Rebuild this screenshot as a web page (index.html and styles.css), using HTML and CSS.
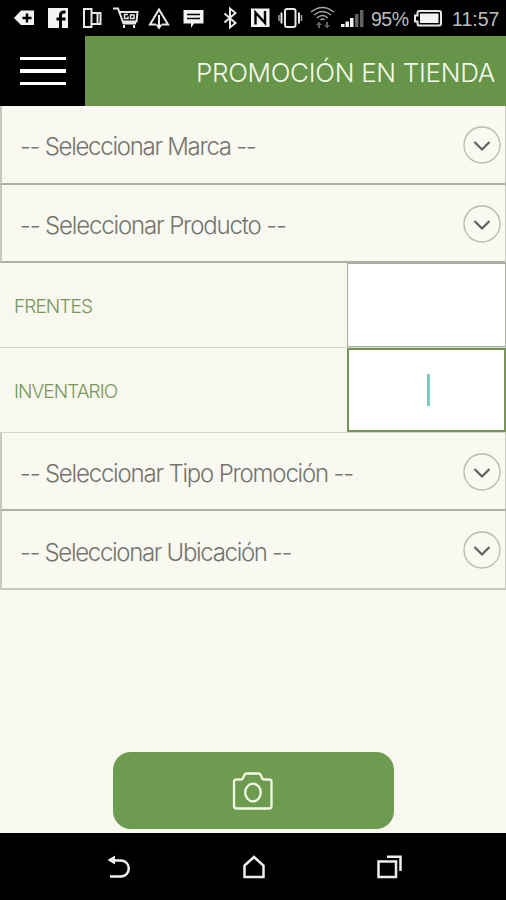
FILE: index.html
```html
<!DOCTYPE html>
<html lang="es">
<head>
<meta charset="utf-8">
<title>Promoción en tienda</title>
<link rel="stylesheet" href="styles.css">
</head>
<body>
<div class="screen">
  <div class="status">
    <svg width="41" height="36" viewBox="0 0 41 36"><path class="fill" d="M14 18l7-7.500h13v14.500H21z"/><path class="ink" d="M27 13.500v9M22.500 18h9"/></svg>
    <svg width="35" height="36" viewBox="41 0 35 36"><path class="fill" d="M48 8h20v20H48z"/><path class="ink bold" d="M60.500 28V15.500q0-3.500 3.500-3.500h1.500M56.500 19h9"/></svg>
    <svg width="33" height="36" viewBox="76 0 33 36"><path class="line" d="M84 9h7.500v18H84zM92 13h8.500v11H92M97.500 13v11"/></svg>
    <svg width="34" height="36" viewBox="109 0 34 36"><path class="line" d="M113 8.500h5l5.500 15H136M120 12h17.500l-1 9.500H123M124 28v-3M134 28v-3"/><path class="line thin" d="M128 14.500h-3.500v4h3.500v-2M130.500 15h3.500v3.500h-3.500z"/></svg>
    <svg width="33" height="36" viewBox="143 0 33 36"><path class="line" d="M156 24.500h-6l9-15 9 15h-6M159 15v11"/><path class="fill" d="M155.500 24.500h7l-3.500 5z"/></svg>
    <svg width="35" height="36" viewBox="176 0 35 36"><path class="fill" d="M183.500 10h20v13.500H194l-3 4.500v-4.500h-7.500z"/><path class="ink thin" d="M187 14.500h13M187 18.500h13"/></svg>
    <svg width="34" height="36" viewBox="211 0 34 36"><path class="line" d="M224.500 13.500l11 9.500-5.500 4.500V8.500l5.500 4.500-11 9.500"/></svg>
    <svg width="30" height="36" viewBox="245 0 30 36"><path class="fill" d="M251 8.500h18.500V27H251z"/><path class="ink" d="M255.500 24.500v-12l9.500 10.500v-12"/></svg>
    <svg width="30" height="36" viewBox="275 0 30 36"><rect class="line" x="285" y="9" width="10.500" height="18" rx="2"/><path class="line" d="M281.500 12.500v11M299 12.500v11"/><path class="line dim" d="M279 15v6M301.500 15v6"/></svg>
    <svg width="33" height="36" viewBox="305 0 33 36"><path class="line dim" d="M311 12q11.500-9 23 0M314 15q8.500-7 17 0M317 18q5.500-5 11 0M320.500 20q2-2 4 0"/><path class="faint" d="M316 25l3-3.500 3 3.500h-2v3h-2v-3zM324 25h2v-3h2v3h2l-3 3.500z"/></svg>
    <svg width="31" height="36" viewBox="338 0 31 36"><path class="fill" d="M341 24h3.500v3H341zM345.500 21.500h3.500V27h-3.500zM350 18h3.500v9H350z"/><path class="faint" d="M355 14h3.500v13H355zM360 10h3.500v17H360z"/></svg>
    <span class="charge">95%</span>
    <svg width="32" height="36" viewBox="411 0 32 36"><path class="line" d="M419 11h20q2 0 2 2v10.500q0 2-2 2h-20q-1.500 0-1.500-2v-2H415v-6h2.500V13q0-2 1.500-2z"/><path class="fill" d="M420 13.500h18.500v9.500H420z"/></svg>
    <span class="clock">11:57</span>
  </div>
  <header class="header">
    <button class="menu" aria-label="Menú"><i></i><i></i><i></i></button>
    <h1 class="title"><span>PROMOCIÓN EN TIENDA</span></h1>
  </header>
  <main class="form">
    <div class="select"><span class="marca">-- Seleccionar Marca --</span><svg class="chevron" viewBox="0 0 38 38"><circle cx="19" cy="19" r="18"/><path d="M11.500 16l7.500 7.500 7.500-7.500"/></svg></div>
    <div class="select"><span class="producto">-- Seleccionar Producto --</span><svg class="chevron" viewBox="0 0 38 38"><circle cx="19" cy="19" r="18"/><path d="M11.500 16l7.500 7.500 7.500-7.500"/></svg></div>
    <div class="field"><label class="frentes">FRENTES</label><div class="input"></div></div>
    <div class="field"><label class="inventario">INVENTARIO</label><div class="input focused"><i class="caret"></i></div></div>
    <div class="select"><span class="tipo">-- Seleccionar Tipo Promoción --</span><svg class="chevron" viewBox="0 0 38 38"><circle cx="19" cy="19" r="18"/><path d="M11.500 16l7.500 7.500 7.500-7.500"/></svg></div>
    <div class="select last"><span class="ubicacion">-- Seleccionar Ubicación --</span><svg class="chevron" viewBox="0 0 38 38"><circle cx="19" cy="19" r="18"/><path d="M11.500 16l7.500 7.500 7.500-7.500"/></svg></div>
  </main>
  <button class="camera" aria-label="Tomar foto"><svg width="42" height="40" viewBox="0 0 42 40"><path d="M4.500 8.500H9q1.500 0 2-1.500l1.500-3q.7-1.500 2-1.500h12q1.500 0 2.200 1.500l1.300 3q.5 1.500 2 1.500h5q2.500 0 2.500 2.500v24q0 2.500-2.500 2.500H4.500Q2 37.500 2 35V11q0-2.500 2.500-2.500z"/><ellipse cx="21" cy="21.500" rx="7.800" ry="8.800"/></svg></button>
  <nav class="nav">
    <svg width="28" height="28" viewBox="0 0 28 28"><path d="M5 7.500h10.500c11 0 11 16 0 16H5"/><path class="solid" d="M2.500 7l7.500-4.500v9z"/></svg>
    <svg width="28" height="28" viewBox="0 0 28 28"><path d="M4.500 24V12.500L14 4l9.500 8.500V24z"/></svg>
    <svg width="28" height="28" viewBox="0 0 28 28"><path d="M3.500 8.500h17.500v15.500H3.500zM12 3.800h13.500V18"/></svg>
  </nav>
</div>
</body>
</html>
```
FILE: styles.css
```css
* { box-sizing: border-box; }
body { margin: 0; font-family: Inter, "Liberation Sans", sans-serif; font-weight: 300; }
button { border: 0; padding: 0; }
.screen { width: 506px; height: 900px; display: flex; flex-direction: column; background: #f8f8ee; overflow: hidden; white-space: nowrap; }

.status { height: 36px; flex: none; display: flex; align-items: center; background: #000; color: #bdbdbd; font-family: "Liberation Sans", sans-serif; font-size: 19.5px; }
.status svg { flex: none; }
.status span { padding-top: 2px; }
.charge { width: 42px; padding-left: 2px; letter-spacing: -0.5px; }
.clock { padding-left: 9px; }
.fill { fill: #f2f2f2; }
.faint { fill: #626262; }
.line { fill: none; stroke: #e8e8e8; stroke-width: 2; }
.ink { fill: none; stroke: #000; stroke-width: 2.4; }
.line.thin, .ink.thin { stroke-width: 1.5; }
.ink.bold { stroke-width: 3; }
.line.dim { stroke: #a5a5a5; stroke-width: 1.5; }

.header { height: 70px; flex: none; display: flex; background: #66954a; }
.menu { width: 85px; background: #000; display: flex; flex-direction: column; align-items: center; justify-content: center; gap: 9px; }
.menu i { width: 46px; height: 3.5px; background: #fff; }
.title { flex: 1; margin: 0; padding: 2px 11px 0 0; display: flex; align-items: center; justify-content: flex-end; color: #f3faea; font-size: 26px; font-weight: 300; }
.title span { letter-spacing: -0.3px; }

.select { height: 78.7px; display: flex; align-items: center; justify-content: space-between; padding: 5px 4px 0 18px; border: 2px solid #c9c9c1; border-right-width: 1px; border-top-width: 0; border-bottom-color: #aeafa5; background: #f9f9f1; color: #74746e; font-size: 24px; }
.select.last { border-bottom-color: #c9c9c1; }
.marca { letter-spacing: -1.28px; }
.producto { letter-spacing: -1.15px; }
.tipo { letter-spacing: -1.2px; }
.ubicacion { letter-spacing: -1.32px; }
.chevron { width: 38px; height: 38px; margin-top: -4px; fill: none; }
.chevron circle { stroke: #b9b9b1; stroke-width: 1.3; }
.chevron path { stroke: #62625c; stroke-width: 2.2; }
.field { height: 84.7px; display: flex; align-items: stretch; border-bottom: 1px solid #d4d5cd; color: #76965d; font-size: 19px; }
.field label { flex: 1; display: flex; align-items: center; padding: 3px 0 0 14px; }
.frentes { letter-spacing: -0.9px; }
.inventario { letter-spacing: -0.95px; }
.input { width: 159px; background: #fff; border: 1px solid #acada3; display: flex; align-items: center; justify-content: center; }
.input.focused { border: 2px solid #779359; padding-left: 3px; }
.caret { width: 3px; height: 32px; background: #80c7c1; }

.camera { width: 281px; height: 77px; margin: auto auto 4px; flex: none; border-radius: 18px; background: #6d9c51; display: flex; align-items: center; justify-content: center; }
.camera svg { fill: none; stroke: #f2fae5; stroke-width: 2.3; }
.nav { height: 67px; flex: none; display: flex; align-items: center; justify-content: center; gap: 107px; background: #000; padding-left: 1px; }
.nav svg { fill: none; stroke: #eee; stroke-width: 2.5; }
.nav .solid { fill: #eee; stroke: none; }
```
